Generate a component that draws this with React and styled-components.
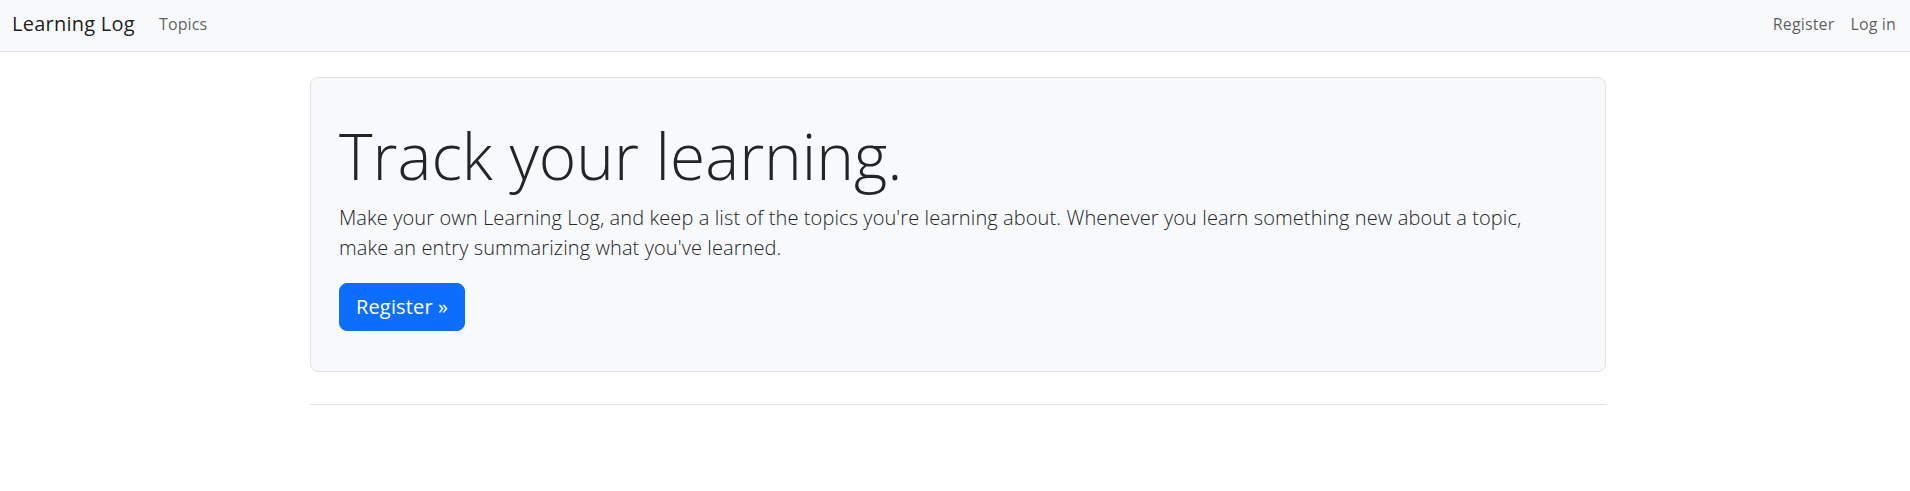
import React from "react";
import styled, { createGlobalStyle } from "styled-components";

const GlobalStyle = createGlobalStyle`
  *, *::before, *::after { box-sizing: border-box; }
  html, body { margin: 0; padding: 0; background: #ffffff; }
  body {
    font-family: "Open Sans", "Liberation Sans", sans-serif;
    font-size: 16px;
    line-height: 1.5;
    color: #212529;
    -webkit-font-smoothing: antialiased;
  }
`;

const Navbar = styled.nav`
  display: flex;
  align-items: center;
  justify-content: space-between;
  height: 52px;
  padding: 0 6px 3px 12px;
  margin-bottom: 25px;
  background: #f8f9fa;
  border-bottom: 1px solid #dee2e6;
`;

const NavGroup = styled.div`
  display: flex;
  align-items: center;
`;

const Brand = styled.a`
  margin-right: 16px;
  font-size: 20px;
  line-height: 30px;
  letter-spacing: 0.25px;
  color: rgba(0, 0, 0, 0.9);
  text-decoration: none;
`;

const NavList = styled.ul`
  display: flex;
  align-items: center;
  margin: 0;
  padding: 0;
  list-style: none;
`;

const NavLink = styled.a`
  display: block;
  padding: 0 8px;
  font-size: 16px;
  line-height: 24px;
  letter-spacing: 0.15px;
  color: rgba(0, 0, 0, 0.65);
  text-decoration: none;
`;

const Page = styled.div`
  padding-left: 6px;
`;

const Container = styled.main`
  max-width: 1320px;
  margin: 0 auto;
  padding: 0 12px;
`;

const PageHeader = styled.div`
  padding-bottom: 8px;
  margin-bottom: 8px;
  border-bottom: 1px solid #dee2e6;
`;

const Hero = styled.section`
  margin-bottom: 24px;
  padding: 40px 28px;
  background: #f8f9fa;
  border: 1px solid #dee2e6;
  border-radius: 8px;
`;

const Display = styled.h1`
  margin: 0 0 8px;
  font-size: 64px;
  font-weight: 300;
  line-height: 1.2;
  color: #212529;
`;

const Lead = styled.p`
  max-width: 1215px;
  margin: 0 0 16px;
  font-size: 20px;
  font-weight: 300;
  line-height: 30px;
  letter-spacing: 0.1px;
  color: #212529;
`;

const Button = styled.a`
  display: inline-block;
  margin-top: 4px;
  padding: 8px 16px;
  font-size: 20px;
  font-weight: 400;
  line-height: 30px;
  letter-spacing: 0.15px;
  color: #ffffff;
  background: #0d6efd;
  border: 1px solid #0d6efd;
  border-radius: 8px;
  text-decoration: none;
`;

export default function App() {
  return (
    <>
      <GlobalStyle />
      <Navbar>
        <NavGroup>
          <Brand href="#">Learning Log</Brand>
          <NavList>
            <li>
              <NavLink href="#">Topics</NavLink>
            </li>
          </NavList>
        </NavGroup>
        <NavList>
          <li>
            <NavLink href="#">Register</NavLink>
          </li>
          <li>
            <NavLink href="#">Log in</NavLink>
          </li>
        </NavList>
      </Navbar>
      <Page>
        <Container>
          <PageHeader>
            <Hero>
              <Display>Track your learning.</Display>
              <Lead>
                Make your own Learning Log, and keep a list of the topics you're learning about. Whenever you learn
                something new about a topic, make an entry summarizing what you've learned.
              </Lead>
              <Button href="#">Register &raquo;</Button>
            </Hero>
          </PageHeader>
        </Container>
      </Page>
    </>
  );
}
